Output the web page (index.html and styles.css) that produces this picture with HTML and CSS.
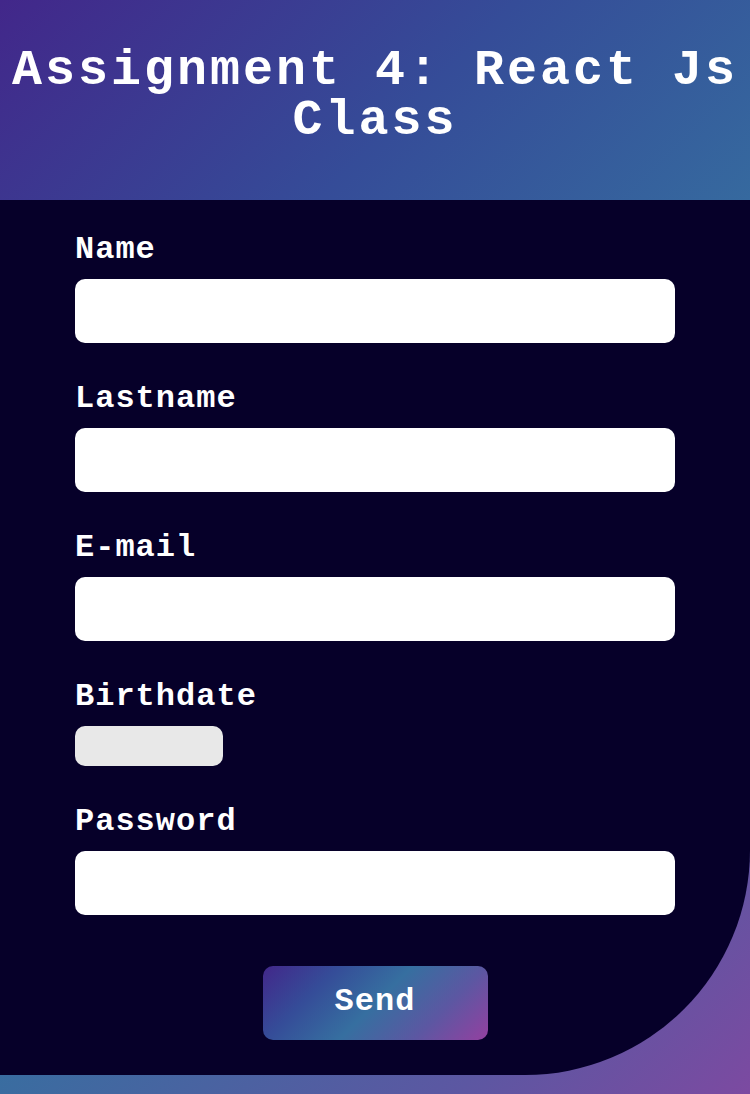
FILE: index.html
```html
<!DOCTYPE html>
<html lang="en">
<head>
  <meta charset="utf-8">
  <meta name="viewport" content="width=device-width, initial-scale=1">
  <title>Assignment 4: React Js Class</title>
  <link rel="stylesheet" href="styles.css">
</head>
<body class="page">
  <header class="header">
    <h1 class="title">Assignment 4: React Js Class</h1>
  </header>
  <main class="panel">
    <form class="form">
      <div class="field">
        <label class="label" for="name">Name</label>
        <input class="input" id="name" type="text">
      </div>
      <div class="field">
        <label class="label" for="lastname">Lastname</label>
        <input class="input" id="lastname" type="text">
      </div>
      <div class="field">
        <label class="label" for="email">E-mail</label>
        <input class="input" id="email" type="email">
      </div>
      <div class="field">
        <label class="label" for="birthdate">Birthdate</label>
        <input class="input input-date" id="birthdate" type="text" inputmode="numeric">
      </div>
      <div class="field">
        <label class="label" for="password">Password</label>
        <input class="input" id="password" type="password">
      </div>
      <button class="send" type="submit">Send</button>
    </form>
  </main>
</body>
</html>
```

FILE: styles.css
```css
* {
  box-sizing: border-box;
}

.page {
  margin: 0;
  min-height: 100vh;
  color: #fff;
  font-family: "Special Elite", "Liberation Mono", monospace;
  font-weight: 700;
  background: linear-gradient(135deg, #42278a 0%, #354c98 28%, #366fa0 56%, #5c57a2 84%, #9440a0 112%);
}

.header {
  padding: 46px 0 54px;
}

.title {
  margin: 0;
  font-size: 50px;
  line-height: 50px;
  letter-spacing: 3px;
  text-align: center;
}

.panel {
  padding: 28px 10% 35px;
  background: #060029;
  border-bottom-right-radius: 225px;
}

.form {
  display: flex;
  flex-direction: column;
  gap: 34px;
}

.field {
  display: flex;
  flex-direction: column;
  align-items: flex-start;
  gap: 7px;
}

.label {
  font-size: 32px;
  line-height: 44px;
  letter-spacing: 1px;
}

.input {
  width: 100%;
  height: 64px;
  padding: 0 16px;
  border: 0;
  border-radius: 10px;
  background: #fff;
  color: #060029;
  font: inherit;
  font-size: 32px;
}

.input-date {
  width: 148px;
  height: 40px;
  background: #e8e8e8;
  font-size: 20px;
}

.send {
  align-self: center;
  width: 225px;
  height: 74px;
  margin-top: 17px;
  padding: 0 0 4px;
  border: 0;
  border-radius: 10px;
  background: linear-gradient(135deg, #42278a, #354c98, #366fa0, #5c57a2, #9440a0);
  color: #fff;
  font: inherit;
  font-size: 32px;
  letter-spacing: 1px;
  cursor: pointer;
}
```
